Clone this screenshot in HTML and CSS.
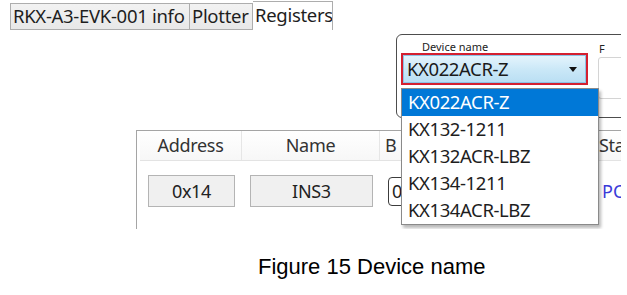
FILE: index.html
```html
<!DOCTYPE html>
<html lang="en">
<head>
<meta charset="utf-8">
<title>Figure 15 Device name</title>
<link rel="stylesheet" href="styles.css">
</head>
<body>
<div class="shot">
  <div class="tabs">
    <div class="tab tab-info">RKX-A3-EVK-001 info</div>
    <div class="tab tab-plot">Plotter</div>
    <div class="tab tab-reg active">Registers</div>
  </div>

  <div class="group">
    <div class="field device">
      <div class="label">Device name</div>
      <div class="combo">
        <span class="combo-text">KX022ACR-Z</span>
        <svg class="arrow" width="8" height="5" viewBox="0 0 8 5"><polygon points="0,0 8,0 4,5" fill="#111"/></svg>
      </div>
    </div>
    <div class="field next">
      <div class="label">F</div>
      <div class="box"></div>
    </div>
  </div>

  <div class="panel">
    <div class="thead">
      <div class="th c-addr">Address</div>
      <div class="th c-name">Name</div>
      <div class="th c-bits">B</div>
      <div class="th c-stat">Status</div>
    </div>
    <div class="trow">
      <div class="td c-addr"><div class="cellbox">0x14</div></div>
      <div class="td c-name"><div class="cellbox">INS3</div></div>
      <div class="td c-bits"><div class="bitbox">0</div></div>
      <div class="td c-stat"><span class="link">PC</span></div>
    </div>
  </div>

  <ul class="droplist">
    <li class="sel">KX022ACR-Z</li>
    <li>KX132-1211</li>
    <li>KX132ACR-LBZ</li>
    <li>KX134-1211</li>
    <li>KX134ACR-LBZ</li>
  </ul>
</div>
<p class="caption">Figure 15 Device name</p>
</body>
</html>
```

FILE: styles.css
```css
html, body {
  margin: 0;
  padding: 0;
  background: #fff;
}

.shot {
  position: relative;
  width: 621px;
  height: 229px;
  overflow: hidden;
  font-family: "Noto Sans", "Open Sans", sans-serif;
  color: #1e1e1e;
}

/* tabs */
.tabs {
  display: flex;
  align-items: flex-end;
  height: 30px;
  margin-left: 10px;
  box-sizing: border-box;
}
.tab {
  box-sizing: border-box;
  height: 27px;
  border: 1px solid #adadad;
  border-left: none;
  background: linear-gradient(#f2f2f2, #e8e8e8);
  font-size: 18.5px;
  line-height: 24px;
  padding-left: 2px;
  white-space: nowrap;
  letter-spacing: -0.3px;
  overflow: hidden;
}
.tab-info { border-left: 1px solid #adadad; width: 180px; }
.tab-plot { width: 63px; }
.tab-reg { width: 80px; }
.tab.active {
  height: 29px;
  background: #fff;
  border-bottom: none;
  line-height: 26px;
}

/* group box */
.group {
  display: flex;
  box-sizing: border-box;
  width: 240px;
  height: 84px;
  margin-top: 4px;
  margin-left: 396px;
  border: 1px solid #4d4d4d;
  border-radius: 6px;
}
.field { display: flex; flex-direction: column; }
.device { width: 202px; margin-left: 4px; }
.label {
  font-size: 11px;
  line-height: 12px;
  height: 12px;
  margin-top: 6px;
  padding-left: 21px;
  color: #222;
}
.combo {
  box-sizing: border-box;
  height: 32px;
  border: 2px solid #d42030;
  display: flex;
  align-items: center;
  justify-content: space-between;
  background: linear-gradient(#e6f5fd, #c9e7f7 55%, #b9def3);
  box-shadow: inset 0 0 0 1px #8cc3e6;
  padding: 0 9px 0 4px;
}
.combo-text {
  font-size: 18.5px;
  letter-spacing: -0.4px;
  line-height: 26px;
  color: #1a1a1a;
}
.arrow { display: block; margin-top: 1px; }

.next { margin-left: 10px; width: 40px; }
.next .label { padding-left: 1px; margin-top: 8px; }
.next .box {
  box-sizing: border-box;
  margin-top: 2px;
  height: 42px;
  border: 1px solid #d4d4d4;
  border-radius: 3px;
  background: #fff;
}

/* register table */
.panel {
  box-sizing: border-box;
  width: 520px;
  height: 120px;
  margin-top: 12px;
  margin-left: 136px;
  border-top: 1px solid #a5a5a5;
  border-left: 1px solid #a5a5a5;
  padding-left: 3px;
}
.thead {
  display: flex;
  height: 29px;
  border-bottom: 1px solid #e3e3e3;
  background: linear-gradient(#fff, #f7f7f7);
}
.th {
  box-sizing: border-box;
  font-size: 18px;
  line-height: 28px;
  color: #333;
  text-align: center;
  border-right: 1px solid #e6e6e6;
  letter-spacing: -0.3px;
}
.c-addr { width: 102px; }
.c-name { width: 138px; }
.c-bits { width: 210px; }
.c-stat { width: 60px; }
.th.c-bits { text-align: left; padding-left: 5px; }
.th.c-stat { text-align: left; padding-left: 9px; border-right: none; }

.trow {
  display: flex;
  margin-top: 14px;
}
.td { box-sizing: border-box; }
.cellbox {
  box-sizing: border-box;
  height: 32px;
  border: 1px solid #b4b4b4;
  background: #f0f0f0;
  font-size: 18px;
  line-height: 30px;
  text-align: center;
  color: #222;
  letter-spacing: -0.3px;
}
.c-addr .cellbox { margin: 0 7px 0 8px; }
.c-name .cellbox { margin: 0 7px 0 8px; }
.bitbox {
  box-sizing: border-box;
  width: 60px;
  height: 29px;
  margin: 2px 0 0 8px;
  border: 1px solid #3c3c3c;
  border-radius: 4px;
  font-size: 18px;
  line-height: 27px;
  padding-left: 3px;
  background: #fff;
}
.c-stat.td { padding-left: 12px; }
.link {
  font-size: 18px;
  line-height: 32px;
  color: #3a3ad8;
}

/* dropdown list overlay */
.droplist {
  position: absolute;
  left: 401px;
  top: 88px;
  width: 198px;
  margin: 0;
  padding: 0;
  list-style: none;
  box-sizing: border-box;
  border: 1px solid #8a8a8a;
  background: #fff;
  box-shadow: 2px 3px 3px rgba(0, 0, 0, 0.28);
}
.droplist li {
  height: 27px;
  line-height: 26px;
  padding-left: 6px;
  font-size: 18.5px;
  letter-spacing: -0.4px;
  color: #1e1e1e;
}
.droplist li.sel {
  background: #0078d7;
  color: #fff;
}

.caption {
  margin: 25px 0 0 258px;
  font-family: "Liberation Sans", Arial, sans-serif;
  font-size: 22px;
  color: #000;
}
```
